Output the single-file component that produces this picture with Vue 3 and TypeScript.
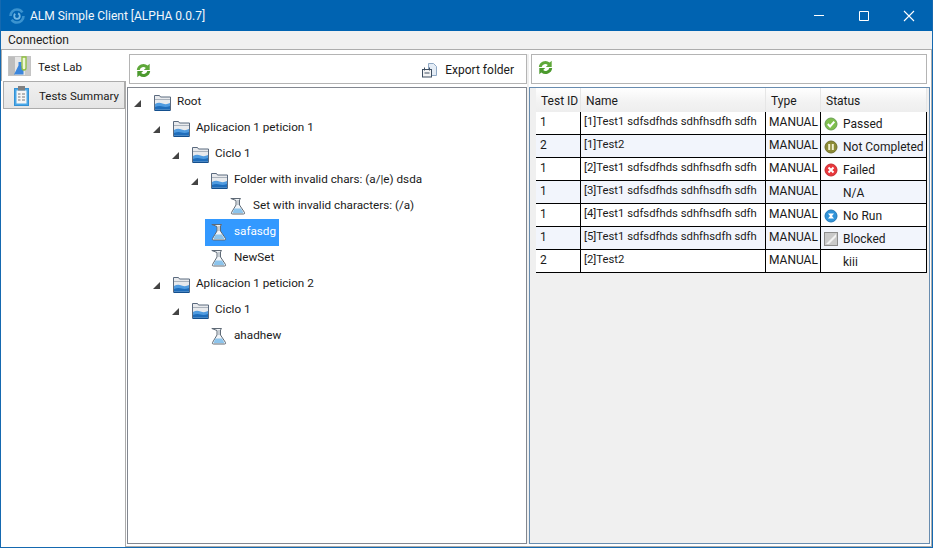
<script setup lang="ts">
interface TreeRow { label: string; level: number; kind: 'folder' | 'set'; selected?: boolean }
interface TestRow { id: string; name: string; status: string; icon: string }

const tree: TreeRow[] = [
  { label: 'Root', level: 0, kind: 'folder' },
  { label: 'Aplicacion 1 peticion 1', level: 1, kind: 'folder' },
  { label: 'Ciclo 1', level: 2, kind: 'folder' },
  { label: 'Folder with invalid chars: (a/|e) dsda', level: 3, kind: 'folder' },
  { label: 'Set with invalid characters: (/a)', level: 4, kind: 'set' },
  { label: 'safasdg', level: 3, kind: 'set', selected: true },
  { label: 'NewSet', level: 3, kind: 'set' },
  { label: 'Aplicacion 1 peticion 2', level: 1, kind: 'folder' },
  { label: 'Ciclo 1', level: 2, kind: 'folder' },
  { label: 'ahadhew', level: 3, kind: 'set' },
]
const long = ' sdfsdfhds sdhfhsdfh sdfh'
const tests: TestRow[] = [
  { id: '1', name: '[1]Test1' + long, status: 'Passed', icon: 'passed' },
  { id: '2', name: '[1]Test2', status: 'Not Completed', icon: 'pause' },
  { id: '1', name: '[2]Test1' + long, status: 'Failed', icon: 'failed' },
  { id: '1', name: '[3]Test1' + long, status: 'N/A', icon: '' },
  { id: '1', name: '[4]Test1' + long, status: 'No Run', icon: 'norun' },
  { id: '1', name: '[5]Test1' + long, status: 'Blocked', icon: 'blocked' },
  { id: '2', name: '[2]Test2', status: 'kiii', icon: '' },
]
</script>

<template>
  <div class="window">
    <header class="title">
      <svg class="logo" width="16" height="16" viewBox="0 0 16 16">
        <circle cx="8" cy="8" r="6.500" fill="none" stroke="#3a93d0" stroke-width="2.600" stroke-dasharray="16 4"/>
        <circle cx="8" cy="8" r="2.800" fill="none" stroke="#74b8e4" stroke-width="1.800" stroke-dasharray="11 3"/>
      </svg>
      <span class="title-text">ALM Simple Client [ALPHA 0.0.7]</span>
      <div class="controls">
        <svg width="12" height="12" viewBox="0 0 12 12"><path d="M1 5.500h10" stroke="#fff" fill="none"/></svg>
        <svg width="12" height="12" viewBox="0 0 12 12"><path d="M1.500 1.500h9v9h-9z" stroke="#fff" fill="none"/></svg>
        <svg width="12" height="12" viewBox="0 0 12 12"><path d="M1 1l10 10M11 1L1 11" stroke="#fff" stroke-width="1.100" fill="none"/></svg>
      </div>
    </header>
    <nav class="menu"><span>Connection</span></nav>
    <main class="body">
      <aside class="tabs">
        <div class="tab active">
          <svg width="23" height="20" viewBox="0 0 23 20">
            <rect x=".5" y=".5" width="22" height="19" fill="#e6e6e6" stroke="#c4c4c4"/>
            <rect x="1" y="1" width="6" height="18" fill="#9a9a9a" opacity=".55"/>
            <rect x="17" y="1" width="5" height="18" fill="#b5b5b5" opacity=".6"/>
            <path d="M6 18.500l4.500-9V6h3v3.500l2 4v5z" fill="#3b86dc"/>
            <path d="M14 1v11a2 2 0 0 0 4 0V1z" fill="#eef6d8" stroke="#8fbf3f" stroke-width="1.300"/>
          </svg>
          <span>Test Lab</span>
        </div>
        <div class="tab other">
          <svg width="15" height="21" viewBox="0 0 15 21">
            <rect x=".5" y="3.500" width="14" height="17" fill="#4aa8e8" stroke="#3491d4"/>
            <rect x="2.500" y="5.500" width="10" height="13" fill="#f6f6f6"/>
            <rect x="4" y="1" width="7" height="4.500" fill="#808080"/>
            <path d="M4 9h2.500M8 9h3M4 12h2.500M8 12h3M4 15h2.500M8 15h3" stroke="#777" fill="none"/>
          </svg>
          <span>Tests Summary</span>
        </div>
      </aside>
      <section class="content">
        <div class="pane left">
          <div class="toolbar tb-left">
            <svg class="refresh" width="15" height="15" viewBox="0 0 15 15">
              <path d="M.8 7A6.600 6.600 0 0 1 11.700 2.600L13.700 .8V7H7.800l2-2A3.800 3.800 0 0 0 3.700 7z" fill="#5fa83a"/>
              <path d="M14.200 8A6.600 6.600 0 0 1 3.300 12.400L1.300 14.200V8h5.900l-2 2A3.800 3.800 0 0 0 11.300 8z" fill="#4c9a2e"/>
            </svg>
            <div class="export">
              <svg width="16" height="16" viewBox="0 0 16 16">
                <path d="M6.500 1.500h5l3 3v9h-8z" fill="#e4ecf5" stroke="#8fa8c4"/>
                <rect x=".5" y="7.500" width="9" height="7.500" fill="#f4f4f4" stroke="#3f4f62"/>
                <path d="M2.500 5.500v3M7.500 5.500v3M2.500 11h5" stroke="#3f4f62" fill="none"/>
              </svg>
              <span>Export folder</span>
            </div>
          </div>
          <div class="tree">
            <div v-for="(r, i) in tree" :key="i" class="node" :class="'lvl' + r.level">
              <span class="arrow" :class="{ hidden: r.kind === 'set' }"></span>
              <div class="item" :class="{ selected: r.selected }">
                <svg v-if="r.kind === 'folder'" width="17" height="17" viewBox="0 0 17 17">
                  <path d="M.5 1.500h5l1 1.500h10v13H.5z" fill="#e8eaed" stroke="#5b6a7e"/>
                  <path d="M1 5.500h15" stroke="#aab2bc" fill="none"/>
                  <path d="M1 10q3.500-2 7.500-.5t7.500-.5v6.500H1z" fill="#4f9be0"/>
                  <path d="M1 13q4-1.500 7.500-.5t7.500-.5v3.500H1z" fill="#1f6dbb"/>
                  <path d="M.5 16.500h16" stroke="#134f8e" fill="none"/>
                </svg>
                <svg v-else width="17" height="18" viewBox="0 0 17 18">
                  <path d="M.8 1.500h9.700l-1 1.500v5l5 7.500q.6 1.500-1 1.500H2.500q-1.700 0-1-1.500L6 8V3.500z" fill="#f2f5f8" stroke="#5f6a76"/>
                  <path d="M4.500 11.500h6.500l2.500 4.500H2.500z" fill="#8cc4ec"/>
                  <path d="M8 3v5" stroke="#9aa4ad" fill="none"/>
                </svg>
                <span>{{ r.label }}</span>
              </div>
            </div>
          </div>
        </div>
        <div class="splitter"></div>
        <div class="pane right">
          <div class="toolbar tb-right">
            <svg class="refresh" width="15" height="15" viewBox="0 0 15 15">
              <path d="M.8 7A6.600 6.600 0 0 1 11.700 2.600L13.700 .8V7H7.800l2-2A3.800 3.800 0 0 0 3.700 7z" fill="#5fa83a"/>
              <path d="M14.200 8A6.600 6.600 0 0 1 3.300 12.400L1.300 14.200V8h5.900l-2 2A3.800 3.800 0 0 0 11.300 8z" fill="#4c9a2e"/>
            </svg>
          </div>
          <div class="grid">
            <div class="row head">
              <div class="cell">Test ID</div>
              <div class="cell">Name</div>
              <div class="cell">Type</div>
              <div class="cell">Status</div>
            </div>
            <div v-for="(t, i) in tests" :key="i" class="row data" :class="{ alt: i % 2 === 1 }">
              <div class="cell">{{ t.id }}</div>
              <div class="cell name">{{ t.name }}</div>
              <div class="cell">MANUAL</div>
              <div class="cell status">
                <svg width="14" height="14" viewBox="0 0 14 14" class="st">
                  <template v-if="t.icon === 'passed'">
                    <circle cx="7" cy="7" r="6" fill="#7fbf4d" stroke="#6b9f55"/>
                    <path d="M3.800 7l2.300 2.400 4.200-4.800" stroke="#fff" stroke-width="2" fill="none"/>
                  </template>
                  <template v-else-if="t.icon === 'pause'">
                    <circle cx="7" cy="7" r="6" fill="#8b8a35" stroke="#6f6e2a"/>
                    <path d="M5.200 4v6M8.800 4v6" stroke="#f2f0d0" stroke-width="2" fill="none"/>
                  </template>
                  <template v-else-if="t.icon === 'failed'">
                    <circle cx="7" cy="7" r="6" fill="#e8373c" stroke="#c62b30"/>
                    <path d="M4.500 4.500l5 5M9.500 4.500l-5 5" stroke="#fff" stroke-width="2" fill="none"/>
                  </template>
                  <template v-else-if="t.icon === 'norun'">
                    <circle cx="7" cy="7" r="6" fill="#2f93d8" stroke="#2379b8"/>
                    <path d="M4 4.500h6l-2 2.500 2 2.500H4l2-2.500z" fill="#fff"/>
                  </template>
                  <template v-else-if="t.icon === 'blocked'">
                    <rect x=".5" y=".5" width="13" height="13" fill="#c9c9c9" stroke="#8d8d8d"/>
                    <path d="M2 12L12 2v3L5 12z" fill="#f2f2f2"/>
                  </template>
                </svg>
                <span>{{ t.status }}</span>
              </div>
            </div>
          </div>
        </div>
      </section>
    </main>
  </div>
</template>

<style>
html, body { margin: 0; background: #fff; }
</style>

<style scoped>
.window {
  width: 933px; height: 548px; box-sizing: border-box;
  display: flex; flex-direction: column;
  border: 1px solid #1569b0; border-top: 0;
  font-family: Roboto, "Open Sans", sans-serif;
  font-size: 12px; color: #1a1a1a; background: #fff; overflow: hidden;
}
.title {
  height: 31px; flex: none; background: #0063b1; color: #fff;
  display: flex; align-items: center; padding-left: 8px;
}
.logo { margin-right: 5px; }
.title-text { font-size: 12px; color: #f2f7fb; }
.controls { margin-left: auto; display: flex; gap: 33px; padding-right: 17px; }
.menu {
  height: 18px; flex: none; background: #f0f0f0;
  padding-left: 7px; line-height: 19px; color: #222;
}
.body { flex: 1; display: flex; min-height: 0; }
.tabs { width: 124px; flex: none; position: relative; z-index: 1; font-size: 11.500px; }
.tab { display: flex; align-items: center; box-sizing: border-box; }
.tab.active {
  height: 32px; width: 125px; padding-left: 6px; gap: 7px; background: #fff;
  border-top: 1px solid #acacac; border-left: 1px solid #acacac;
}
.tab.active span { padding-top: 2px; }
.tab.other {
  height: 28px; width: 122px; margin-left: 2px; padding-left: 10px; gap: 10px;
  background: linear-gradient(#f0f0f0, #e5e5e5); border: 1px solid #acacac;
}
.tab.other span { padding-top: 2px; }
.content {
  flex: 1; display: flex; box-sizing: border-box; min-width: 0;
  border: 1px solid #acacac; padding: 4px 1px 2px 1px; background: #fff;
}
.pane { display: flex; flex-direction: column; gap: 3px; }
.pane.left { width: 400px; flex: none; }
.pane.right { flex: 1; min-width: 0; }
.splitter { width: 2px; flex: none; background: #f0f0f0; }
.toolbar {
  height: 30px; flex: none; box-sizing: border-box; border: 1px solid #b4b4b4;
  display: flex; align-items: center; background: #fff;
}
.tb-left { margin-left: 2px; padding: 2px 12px 0 6px; }
.tb-right { margin-left: 2px; margin-right: 3px; padding: 5px 5px 0 6px; align-items: flex-start; }
.export { margin-left: auto; display: flex; align-items: center; gap: 7px; }
.tree {
  flex: 1; box-sizing: border-box; border: 1px solid #828790; background: #fff;
  padding-top: 1px; font-size: 11.700px;
}
.node { height: 26px; display: flex; align-items: center; }
.lvl0 { padding-left: 6px; } .lvl1 { padding-left: 25px; } .lvl2 { padding-left: 44px; }
.lvl3 { padding-left: 63px; } .lvl4 { padding-left: 82px; }
.arrow {
  width: 0; height: 0; margin-right: 13px; margin-top: 2px; flex: none;
  border-style: solid; border-width: 0 0 7px 7px; border-color: transparent transparent #444 transparent;
}
.arrow.hidden { visibility: hidden; }
.item { display: flex; align-items: center; gap: 6px; height: 27px; padding: 0 3px 0 6px; margin-left: -6px; }
.item span { padding-bottom: 2px; }
.item.selected { background: #3399ff; color: #fff; }
.grid {
  flex: 1; box-sizing: border-box; border: 1px solid #688caf; background: #f0f0f0;
  padding-left: 6px;
}
.row { display: grid; grid-template-columns: 45px 185px 55px 106px; width: 391px; }
.head { height: 24px; background: linear-gradient(#fff, #f2f2f2 60%, #eee); }
.head .cell { border-right: 1px solid #e6e6e6; padding: 5px 0 0 5px; line-height: 16px; }
.data { height: 23px; box-sizing: border-box; background: #fff; border-bottom: 1px solid #000; border-right: 1px solid #000; }
.data.alt { background: #f2f5fc; }
.data .cell { border-right: 1px solid #000; padding: 1px 0 0 3px; line-height: 18px; white-space: nowrap; overflow: hidden; }
.data .cell:first-child { padding-left: 4px; }
.data .cell:last-child { border-right: 0; }
.data .cell.name { font-size: 11.300px; padding-left: 3px; letter-spacing: 0; }
.cell.status { display: flex; align-items: center; gap: 5px; padding: 2px 0 0 3px !important; }
.st { flex: none; }
</style>
